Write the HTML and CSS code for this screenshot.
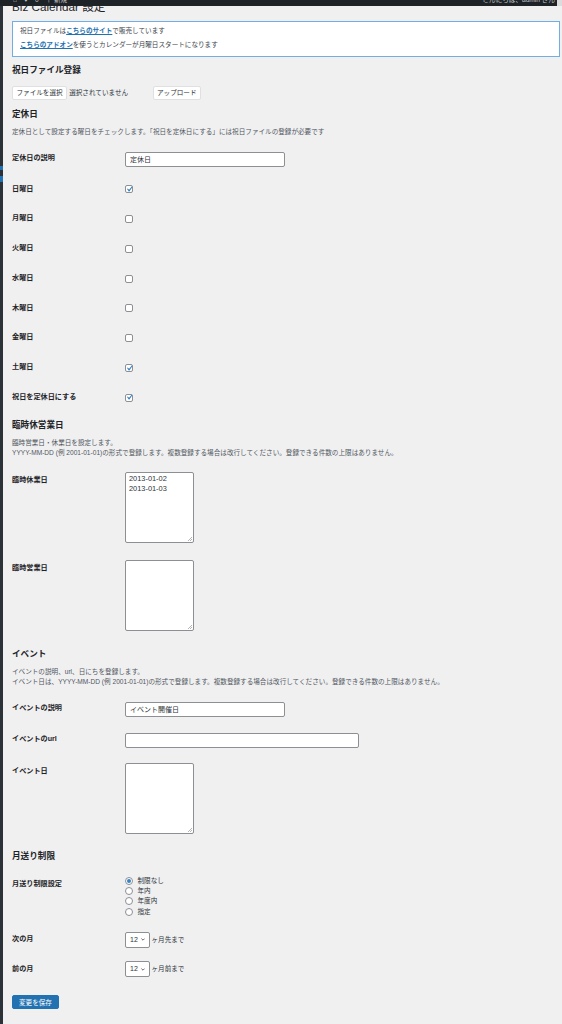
FILE: index.html
```html
<!DOCTYPE html>
<html lang="ja">
<head>
<meta charset="utf-8">
<title>Biz Calendar 設定</title>
<link rel="stylesheet" href="styles.css">
</head>
<body>
<div class="adminbar">
  <div class="ab-left"><span>⌂</span><span>♥</span><span>0</span><span>＋ 新規</span></div>
  <div class="ab-right"><span>こんにちは、admin さん</span><span class="ab-avatar"></span></div>
</div>
<div class="page">
  <div class="adminmenu"><span class="menu-cur a"></span><span class="menu-cur b"></span></div>
  <main class="content">
    <h1>Biz Calendar 設定</h1>
    <div class="notice">
      <p>祝日ファイルは<a href="#">こちらのサイト</a>で販売しています</p>
      <p><a href="#">こちらのアドオン</a>を使うとカレンダーが月曜日スタートになります</p>
    </div>

    <h2>祝日ファイル登録</h2>
    <div class="upload">
      <div class="file"><span class="btn">ファイルを選択</span><span class="file-name">選択されていません</span></div>
      <span class="btn btn-up">アップロード</span>
    </div>

    <h2>定休日</h2>
    <p class="desc">定休日として設定する曜日をチェックします。「祝日を定休日にする」には祝日ファイルの登録が必要です</p>
    <div class="form">
      <div class="row r-input"><div class="th">定休日の説明</div><div class="td"><input class="text w-regular" type="text" value="定休日"></div></div>
      <div class="row"><div class="th">日曜日</div><div class="td"><span class="cb"><svg viewBox="0 0 20 20"><path d="M14.83 4.89l1.34.94-5.81 8.38H9.02L5.78 9.67l1.34-1.25 2.57 2.4z" fill="#3582c4"/></svg></span></div></div>
      <div class="row"><div class="th">月曜日</div><div class="td"><span class="cb"></span></div></div>
      <div class="row"><div class="th">火曜日</div><div class="td"><span class="cb"></span></div></div>
      <div class="row"><div class="th">水曜日</div><div class="td"><span class="cb"></span></div></div>
      <div class="row"><div class="th">木曜日</div><div class="td"><span class="cb"></span></div></div>
      <div class="row"><div class="th">金曜日</div><div class="td"><span class="cb"></span></div></div>
      <div class="row"><div class="th">土曜日</div><div class="td"><span class="cb"><svg viewBox="0 0 20 20"><path d="M14.83 4.89l1.34.94-5.81 8.38H9.02L5.78 9.67l1.34-1.25 2.57 2.4z" fill="#3582c4"/></svg></span></div></div>
      <div class="row"><div class="th">祝日を定休日にする</div><div class="td"><span class="cb"><svg viewBox="0 0 20 20"><path d="M14.83 4.89l1.34.94-5.81 8.38H9.02L5.78 9.67l1.34-1.25 2.57 2.4z" fill="#3582c4"/></svg></span></div></div>
    </div>

    <h2>臨時休営業日</h2>
    <p class="desc">臨時営業日・休業日を設定します。<br>YYYY-MM-DD (例 2001-01-01)の形式で登録します。複数登録する場合は改行してください。登録できる件数の上限はありません。</p>
    <div class="form">
      <div class="row r-top"><div class="th">臨時休業日</div><div class="td"><textarea class="area">2013-01-02
2013-01-03</textarea></div></div>
      <div class="row r-top"><div class="th">臨時営業日</div><div class="td"><textarea class="area"></textarea></div></div>
    </div>

    <h2>イベント</h2>
    <p class="desc">イベントの説明、url、日にちを登録します。<br>イベント日は、YYYY-MM-DD (例 2001-01-01)の形式で登録します。複数登録する場合は改行してください。登録できる件数の上限はありません。</p>
    <div class="form">
      <div class="row r-input"><div class="th">イベントの説明</div><div class="td"><input class="text w-regular" type="text" value="イベント開催日"></div></div>
      <div class="row r-input"><div class="th">イベントのurl</div><div class="td"><input class="text w-url" type="text" value=""></div></div>
      <div class="row r-top"><div class="th">イベント日</div><div class="td"><textarea class="area"></textarea></div></div>
    </div>

    <h2>月送り制限</h2>
    <div class="form">
      <div class="row r-top r-radio"><div class="th">月送り制限設定</div>
        <div class="td radios">
          <label class="radio"><span class="rb on"></span>制限なし</label>
          <label class="radio"><span class="rb"></span>年内</label>
          <label class="radio"><span class="rb"></span>年度内</label>
          <label class="radio"><span class="rb"></span>指定</label>
        </div>
      </div>
      <div class="row r-select"><div class="th">次の月</div><div class="td sel-wrap"><span class="select"><span>12</span><svg class="chev" viewBox="0 0 4 3"><path d="M0.4 0.6 L2 2.2 L3.6 0.6" fill="none" stroke="#50575e" stroke-width="0.9"/></svg></span><span class="suffix">ヶ月先まで</span></div></div>
      <div class="row r-select"><div class="th">前の月</div><div class="td sel-wrap"><span class="select"><span>12</span><svg class="chev" viewBox="0 0 4 3"><path d="M0.4 0.6 L2 2.2 L3.6 0.6" fill="none" stroke="#50575e" stroke-width="0.9"/></svg></span><span class="suffix">ヶ月前まで</span></div></div>
    </div>

    <div class="submit"><button class="save" type="button">変更を保存</button></div>
  </main>
</div>
</body>
</html>
```

FILE: styles.css
```css
* { box-sizing: border-box; }
html, body { margin: 0; padding: 0; }
body {
  background: #f0f0f1;
  font-family: "Liberation Sans", "Noto Sans CJK JP", sans-serif;
  font-size: 6.6px;
  line-height: 10px;
  color: #3c434a;
}

.adminbar {
  position: absolute;
  top: 0; left: 0;
  width: 562px;
  height: 6px;
  background: #1d2327;
  overflow: hidden;
  display: flex;
  justify-content: space-between;
  color: #c3c4c7;
  z-index: 2;
}
.ab-left { display: flex; gap: 7px; padding-left: 13px; margin-top: -5px; }
.ab-right { display: flex; gap: 2px; margin-top: -5px; }
.ab-avatar { width: 5px; height: 10px; background: #dcdcde; margin-top: 3px; }

.page { display: flex; min-height: 1024px; }
.adminmenu {
  width: 3px;
  flex: none;
  background: #2c3338;
  padding-top: 166px;
  display: flex;
  flex-direction: column;
}
.menu-cur { display: block; background: #2271b1; }
.menu-cur.a { height: 4px; }
.menu-cur.b { height: 6px; margin-top: 6px; }

.content { flex: 1; padding: 0 2px 0 9px; }

h1 {
  margin: 0;
  font-size: 11.7px;
  line-height: 14px;
  font-weight: 400;
  color: #1d2327;
}

.notice {
  margin-top: 7px;
  background: #fff;
  border: 1px solid #72aee6;
  padding: 0 8px 2px 7px;
}
.notice p { margin: 4px 0; line-height: 10px; color: #3c434a; }
.notice a { color: #2271b1; font-weight: 700; text-decoration: underline; }

h2 {
  margin: 7.5px 0 7px;
  font-size: 8.6px;
  line-height: 11px;
  font-weight: 700;
  color: #1d2327;
}

.upload { display: flex; align-items: center; height: 14px; margin: 10px 0 9px; }
.file { display: flex; align-items: center; width: 141px; }
.btn {
  display: inline-flex;
  align-items: center;
  justify-content: center;
  height: 14px;
  padding: 0 3.5px;
  background: #fff;
  border: 1px solid #e0e0e2;
  border-radius: 2px;
  color: #2c3338;
  font-size: 6.6px;
}
.btn-up { padding: 0 3px; }
.file-name { margin-left: 2px; color: #2c3338; }

.desc { margin: 0 0 7px; color: #50575e; line-height: 10px; }

.row { display: flex; align-items: center; padding: 10px 0; }
.th {
  width: 113px;
  flex: none;
  font-size: 7.15px;
  font-weight: 700;
  color: #1d2327;
  line-height: 9.75px;
}
.td { display: flex; align-items: center; }
.r-input { padding: 8px 0; }
.r-top { align-items: flex-start; padding: 7px 0 10px; }
.r-top .th { padding-top: 3px; line-height: 10px; }
.r-radio { padding-bottom: 8px; }
.r-select { padding: 6.875px 0; }

.text {
  display: block;
  height: 15px;
  margin: 0;
  padding: 0 4px;
  border: 1px solid #8c8f94;
  border-radius: 2px;
  background: #fff;
  font-family: "Liberation Sans", "Noto Sans CJK JP", sans-serif;
  font-size: 7px;
  color: #2c3338;
  outline: none;
}
.w-regular { width: 160px; }
.w-url { width: 234px; }

.area {
  display: block;
  width: 69px;
  height: 71px;
  margin: 0;
  padding: 0.5px 3px;
  border: 1px solid #8c8f94;
  border-radius: 2px;
  background: #fff;
  font-family: "Liberation Sans", "Noto Sans CJK JP", sans-serif;
  font-size: 7.4px;
  line-height: 10px;
  color: #2c3338;
  outline: none;
}
.area::-webkit-resizer {
  background:
    linear-gradient(135deg,
      transparent 45%, #b4b6b9 45%, #b4b6b9 57%,
      transparent 57%, transparent 72%, #b4b6b9 72%, #b4b6b9 84%, transparent 84%)
    right 1px bottom 1px / 4px 4px no-repeat;
}

.cb {
  display: flex;
  align-items: center;
  justify-content: center;
  width: 8px;
  height: 8px;
  border: 1px solid #8c8f94;
  border-radius: 2px;
  background: #fff;
}
.cb svg { width: 10.5px; height: 10.5px; flex: none; }

.radios { flex-direction: column; align-items: flex-start; }
.radio {
  display: flex;
  align-items: center;
  gap: 5px;
  height: 10.2px;
  line-height: 10.2px;
  color: #2c3338;
}
.rb {
  display: flex;
  align-items: center;
  justify-content: center;
  width: 8px;
  height: 8px;
  margin-left: -0.5px;
  border: 1px solid #8c8f94;
  border-radius: 50%;
  background: #fff;
}
.rb.on::before {
  content: "";
  width: 4px;
  height: 4px;
  border-radius: 50%;
  background: #3582c4;
}

.select {
  display: flex;
  align-items: center;
  justify-content: space-between;
  width: 25px;
  height: 16px;
  padding: 0 4px;
  border: 1px solid #8c8f94;
  border-radius: 2px;
  background: #fff;
  color: #2c3338;
  font-size: 7px;
}
.chev { width: 4px; height: 3px; }
.suffix { margin-left: 1.5px; color: #2c3338; }

.submit { margin-top: 10.5px; }
.save {
  display: inline-flex;
  align-items: center;
  height: 14px;
  padding: 0 6px;
  margin: 0;
  background: #2271b1;
  border: 1px solid #2271b1;
  border-radius: 2px;
  color: #fff;
  font-family: "Liberation Sans", "Noto Sans CJK JP", sans-serif;
  font-size: 6.6px;
}
```
